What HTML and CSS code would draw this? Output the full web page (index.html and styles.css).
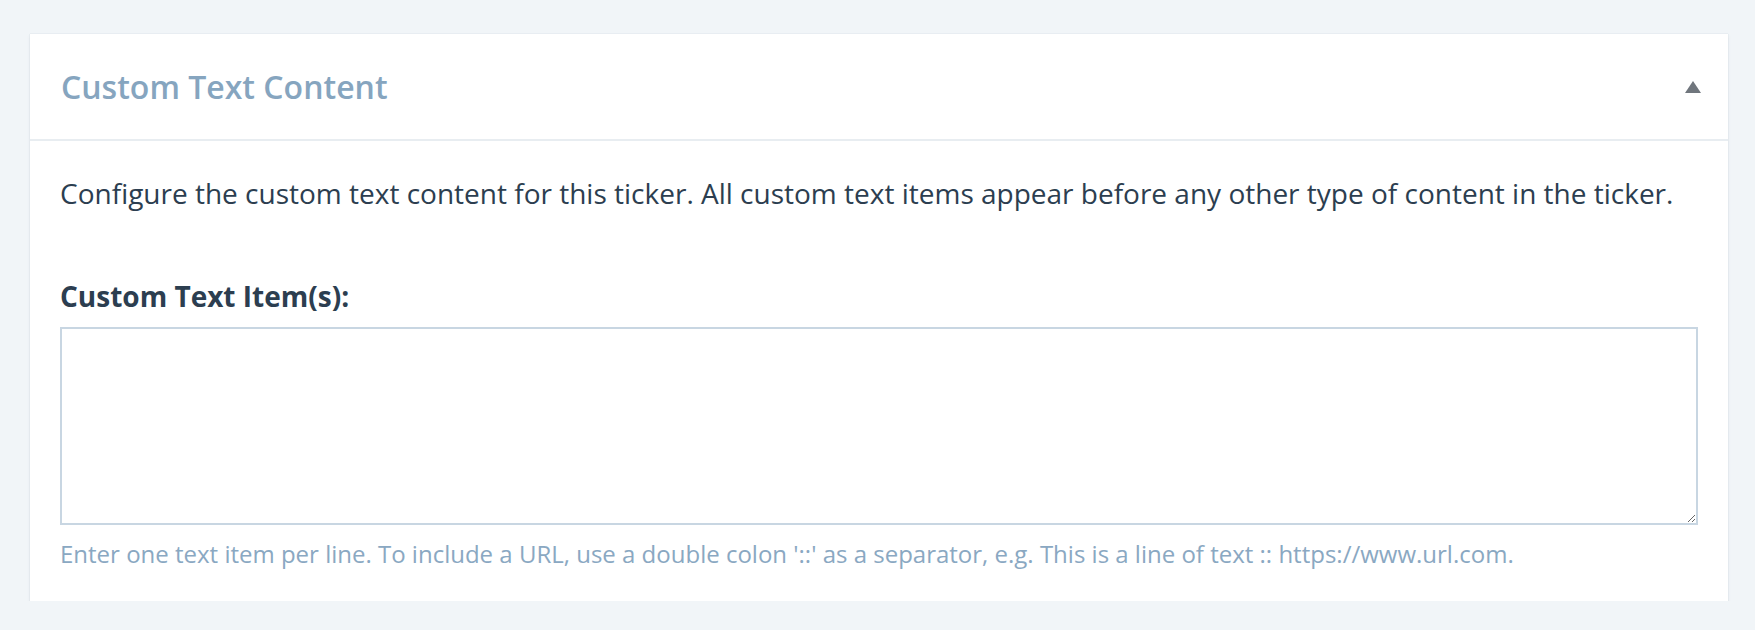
FILE: index.html
```html
<!DOCTYPE html>
<html lang="en">
<head>
<meta charset="utf-8">
<title>Custom Text Content</title>
<link rel="stylesheet" href="styles.css">
</head>
<body>
<div class="page">
  <section class="card">
    <header class="card-header">
      <h2 class="card-title">Custom Text Content</h2>
      <span class="toggle" aria-hidden="true"></span>
    </header>
    <div class="card-body">
      <p class="intro">Configure the custom text content for this ticker. All custom text items appear before any other type of content in the ticker.</p>
      <label class="field-label" for="items">Custom Text Item(s):</label>
      <textarea id="items" class="field-input"></textarea>
      <p class="help">Enter one text item per line. To include a URL, use a double colon '::' as a separator, e.g. This is a line of text :: https://www.url.com.</p>
    </div>
  </section>
</div>
</body>
</html>
```

FILE: styles.css
```css
html, body {
  margin: 0;
  padding: 0;
  background: #f1f5f8;
  font-family: "Open Sans", "Noto Sans", sans-serif;
}

.page {
  padding: 34px 27px 0 30px;
}

.card {
  background: #ffffff;
  box-shadow: 0 0 1px rgba(120, 140, 160, 0.35), 0 2px 3px rgba(120, 140, 160, 0.12);
}

.card-header {
  height: 107px;
  padding: 0 27px 0 31px;
  display: flex;
  align-items: center;
  justify-content: space-between;
  border-bottom: 2px solid #e8edf1;
  box-sizing: border-box;
}

.card-title {
  margin: 0;
  font-size: 32px;
  line-height: 44px;
  font-weight: 600;
  color: #86a5bf;
}

.toggle {
  width: 0;
  height: 0;
  border-left: 8px solid transparent;
  border-right: 8px solid transparent;
  border-bottom: 12px solid #70767d;
}

.card-body {
  padding: 32px 30px 30px 30px;
}

.intro {
  margin: 0 0 63px 0;
  font-size: 28px;
  line-height: 40px;
  color: #2c3e50;
}

.field-label {
  display: block;
  font-size: 28px;
  font-weight: 700;
  line-height: 40px;
  color: #2c3e50;
  margin-bottom: 11px;
}

.field-input {
  display: block;
  width: 100%;
  height: 198px;
  box-sizing: border-box;
  border: 2px solid #c8d6e2;
  margin: 0;
  background: #fff;
}

.help {
  margin: 12px 0 0 0;
  font-size: 24px;
  line-height: 34px;
  color: #8aa8c2;
}
```
